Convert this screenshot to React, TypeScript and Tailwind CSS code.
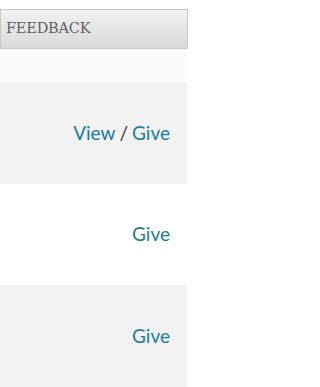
export default function App() {
  const link = "text-[#1b7c9c] hover:underline";
  return (
    <div className="w-[200px] h-[387px] bg-white overflow-hidden pt-[9px]">
      <div className="w-[188px] h-[40px] border border-[#c8c8c8] bg-gradient-to-b from-[#f2f2f2] to-[#d9d9d9] flex items-center pl-[5px]">
        <span className="text-[14.5px] text-[#606060] tracking-[-0.2px]" style={{ fontFamily: '"DejaVu Serif", serif' }}>
          FEEDBACK
        </span>
      </div>
      <div className="w-[187px]" style={{ fontFamily: 'Lato, sans-serif' }}>
        <div className="h-[34px] bg-[#fafafa]" />
        <div className="h-[101px] bg-[#f2f2f2] flex items-center justify-end pr-[17px] text-[19px]">
          <span className={link}>View</span>
          <span className="text-[#333] mx-[4px]">/</span>
          <span className={link}>Give</span>
        </div>
        <div className="h-[101px] bg-white flex items-center justify-end pr-[17px] text-[19px]">
          <span className={link}>Give</span>
        </div>
        <div className="h-[102px] bg-[#f2f2f2] flex items-center justify-end pr-[17px] text-[19px]">
          <span className={link}>Give</span>
        </div>
      </div>
    </div>
  );
}
